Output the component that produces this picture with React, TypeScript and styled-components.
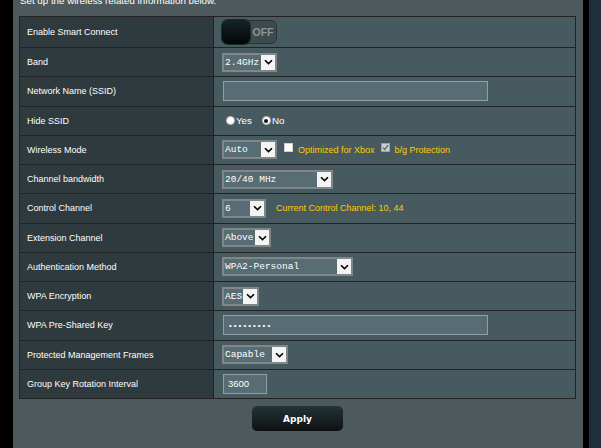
import React from "react";
import styled, { createGlobalStyle } from "styled-components";

const Global = createGlobalStyle`
  html, body { margin: 0; padding: 0; background: #1f2f3b; }
  body { font-family: "Liberation Sans", Arial, sans-serif; }
`;

const Page = styled.div`
  display: flex;
  width: 601px;
  height: 448px;
  overflow: hidden;
  background: #1f2f3b;
`;

const LeftEdge = styled.div`
  width: 13px;
  flex: none;
  background: #000;
`;

const RightEdge = styled.div`
  width: 6px;
  flex: none;
  background: #000;
`;

const Panel = styled.div`
  width: 570px;
  flex: none;
  background: #4d595d;
  display: flex;
  flex-direction: column;
  padding: 0 7px 0 6px;
  box-sizing: border-box;
`;

const Intro = styled.div`
  margin-top: -5px;
  height: 12px;
  line-height: 12px;
  font-size: 9.75px;
  color: #fff;
  padding-left: 1px;
  white-space: nowrap;
`;

const Form = styled.div`
  margin-top: 9px;
  display: grid;
  grid-template-columns: 193px 361px;
  grid-template-rows: 30px;
  grid-auto-rows: 28.25px;
  gap: 1px;
  padding: 1px;
  background: #222;
`;

const Label = styled.div`
  background: #2f3a3e;
  color: #fff;
  font-size: 9px;
  padding-left: 7px;
  display: flex;
  align-items: center;
  white-space: nowrap;
`;

const Value = styled.div`
  background: #475a5f;
  padding-left: 8px;
  display: flex;
  align-items: center;
  color: #fff;
  white-space: nowrap;
`;

const Switch = styled.div`
  width: 55px;
  height: 24px;
  box-sizing: border-box;
  border-radius: 6px;
  background: #3d4a4e;
  border: 1px solid #2c3538;
  display: flex;
  align-items: stretch;
`;

const Knob = styled.div`
  width: 28px;
  margin: -1px 0 -1px -1px;
  border-radius: 6px;
  background: linear-gradient(#142427, #020606);
  box-shadow: 0 0 0 1px #1d2a24;
`;

const SwitchText = styled.span`
  flex: 1;
  display: flex;
  align-items: center;
  justify-content: center;
  font-weight: bold;
  font-size: 10.5px;
  color: #8b9597;
`;

const SelectBox = styled.div<{ $w: number }>`
  width: ${(p) => p.$w}px;
  height: 19px;
  box-sizing: border-box;
  border: 2px solid #7f8789;
  background: #576d73;
  display: flex;
  align-items: stretch;
  font-family: "Liberation Mono", "DejaVu Sans Mono", monospace;
  font-size: 9.5px;
  color: #fff;
`;

const SelectText = styled.span`
  flex: 1;
  display: flex;
  align-items: center;
  padding-left: 1px;
  overflow: hidden;
`;

const Arrow = styled.span`
  width: 14px;
  flex: none;
  background: #f4f4f4;
  display: flex;
  align-items: center;
  justify-content: center;
`;

const TextInput = styled.div<{ $w: number }>`
  width: ${(p) => p.$w}px;
  height: 20px;
  box-sizing: border-box;
  margin-left: 1px;
  border: 1px solid #929ea1;
  background: #576d73;
  display: flex;
  align-items: center;
  padding-left: 4px;
  color: #fff;
  font-size: 9.5px;
`;

const Dots = styled.span`
  font-family: "Liberation Mono", monospace;
  font-size: 8px;
  color: #fff;
`;

const RadioGroup = styled.label`
  display: inline-flex;
  align-items: center;
  margin-left: 4px;
  margin-right: 6px;
  font-size: 9.75px;
  color: #fff;
`;

const RadioDot = styled.span<{ $on?: boolean }>`
  width: 9px;
  height: 9px;
  border-radius: 50%;
  background: #fff;
  box-sizing: border-box;
  border: 1px solid #b8bcbd;
  margin-right: 1px;
  display: inline-flex;
  align-items: center;
  justify-content: center;
  &::after {
    content: "";
    width: 4px;
    height: 4px;
    border-radius: 50%;
    background: ${(p) => (p.$on ? "#111" : "transparent")};
  }
`;

const Check = styled.span<{ $on?: boolean }>`
  width: 9px;
  height: 9px;
  box-sizing: border-box;
  margin-left: ${(p) => (p.$on ? 6 : 7)}px;
  margin-right: 5px;
  margin-top: -5px;
  border: 1px solid ${(p) => (p.$on ? "#9aa2a4" : "#d0d0d0")};
  background: ${(p) => (p.$on ? "#c9cfd0" : "#fff")};
  display: inline-flex;
  align-items: center;
  justify-content: center;
`;

const Note = styled.span<{ $ml?: number }>`
  color: #ffcc00;
  font-size: 9px;
  margin-left: ${(p) => p.$ml ?? 0}px;
`;

const ButtonRow = styled.div`
  display: flex;
  justify-content: center;
  margin-top: 7px;
`;

const ApplyButton = styled.button`
  width: 91px;
  height: 25px;
  border: none;
  border-radius: 5px;
  background: linear-gradient(#233438, #0f1011);
  color: #fff;
  font-family: "DejaVu Sans", Verdana, sans-serif;
  font-weight: bold;
  font-size: 9px;
  padding: 0;
  cursor: pointer;
`;

const Chevron = () => (
  <svg width="9" height="6" viewBox="0 0 9 6">
    <path d="M1 1.2 L4.5 4.6 L8 1.2" fill="none" stroke="#000" strokeWidth="1.6" />
  </svg>
);

const Select = ({ w, value }: { w: number; value: string }) => (
  <SelectBox $w={w}>
    <SelectText>{value}</SelectText>
    <Arrow>
      <Chevron />
    </Arrow>
  </SelectBox>
);

const Tick = () => (
  <svg width="7" height="7" viewBox="0 0 7 7">
    <path d="M1 3.6 L2.8 5.4 L6 1.2" fill="none" stroke="#5d6668" strokeWidth="1.3" />
  </svg>
);

export default function App() {
  return (
    <>
      <Global />
      <Page>
        <LeftEdge />
        <Panel>
          <Intro>Set up the wireless related information below.</Intro>
          <Form>
            <Label>Enable Smart Connect</Label>
            <Value>
              <Switch>
                <Knob />
                <SwitchText>OFF</SwitchText>
              </Switch>
            </Value>

            <Label>Band</Label>
            <Value>
              <Select w={55} value="2.4GHz" />
            </Value>

            <Label>Network Name (SSID)</Label>
            <Value>
              <TextInput $w={265} />
            </Value>

            <Label>Hide SSID</Label>
            <Value>
              <RadioGroup>
                <RadioDot />
                Yes
              </RadioGroup>
              <RadioGroup>
                <RadioDot $on />
                No
              </RadioGroup>
            </Value>

            <Label>Wireless Mode</Label>
            <Value>
              <Select w={55} value="Auto" />
              <Check />
              <Note>Optimized for Xbox</Note>
              <Check $on>
                <Tick />
              </Check>
              <Note>b/g Protection</Note>
            </Value>

            <Label>Channel bandwidth</Label>
            <Value>
              <Select w={111} value="20/40 MHz" />
            </Value>

            <Label>Control Channel</Label>
            <Value>
              <Select w={44} value="6" />
              <Note $ml={10}>Current Control Channel: 10, 44</Note>
            </Value>

            <Label>Extension Channel</Label>
            <Value>
              <Select w={49} value="Above" />
            </Value>

            <Label>Authentication Method</Label>
            <Value>
              <Select w={131} value="WPA2-Personal" />
            </Value>

            <Label>WPA Encryption</Label>
            <Value>
              <Select w={37} value="AES" />
            </Value>

            <Label>WPA Pre-Shared Key</Label>
            <Value>
              <TextInput $w={265}>
                <Dots>•••••••••</Dots>
              </TextInput>
            </Value>

            <Label>Protected Management Frames</Label>
            <Value>
              <Select w={66} value="Capable" />
            </Value>

            <Label>Group Key Rotation Interval</Label>
            <Value>
              <TextInput $w={44}>3600</TextInput>
            </Value>
          </Form>
          <ButtonRow>
            <ApplyButton>Apply</ApplyButton>
          </ButtonRow>
        </Panel>
        <RightEdge />
      </Page>
    </>
  );
}
